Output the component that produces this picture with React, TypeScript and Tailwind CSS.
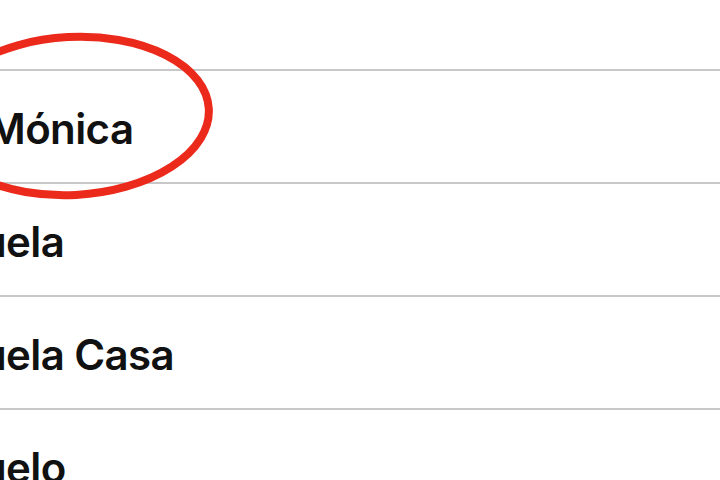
const contacts = [
  { name: "Mónica", offset: "ml-[-13px]" },
  { name: "uela", offset: "ml-[-19px]" },
  { name: "uela Casa", offset: "ml-[-19px]" },
  { name: "uelo", offset: "ml-[-19px]" },
]

const App = () => {
  return (
    <div
      className="relative h-[480px] w-[720px] overflow-hidden bg-white text-black"
      style={{ fontFamily: "Inter, 'Noto Sans', sans-serif" }}
    >
      <div className="h-[71px] border-b-2 border-[#c8c8c8]" />
      {contacts.map(({ name, offset }) => (
        <div
          key={name}
          className="flex h-[113px] items-center border-b-2 border-[#c8c8c8] bg-white"
        >
          <div
            className={`${offset} mt-[4px] whitespace-nowrap text-[42px] font-semibold leading-none tracking-[-0.6px] text-[#111]`}
          >
            {name}
          </div>
        </div>
      ))}
      <svg
        className="pointer-events-none absolute left-0 top-0"
        width="720"
        height="480"
        viewBox="0 0 720 480"
      >
        <ellipse
          cx="72"
          cy="116"
          rx="137"
          ry="79"
          transform="rotate(-3 72 116)"
          fill="none"
          stroke="#ec2a1c"
          strokeWidth="8"
        />
      </svg>
    </div>
  )
}

export default App
